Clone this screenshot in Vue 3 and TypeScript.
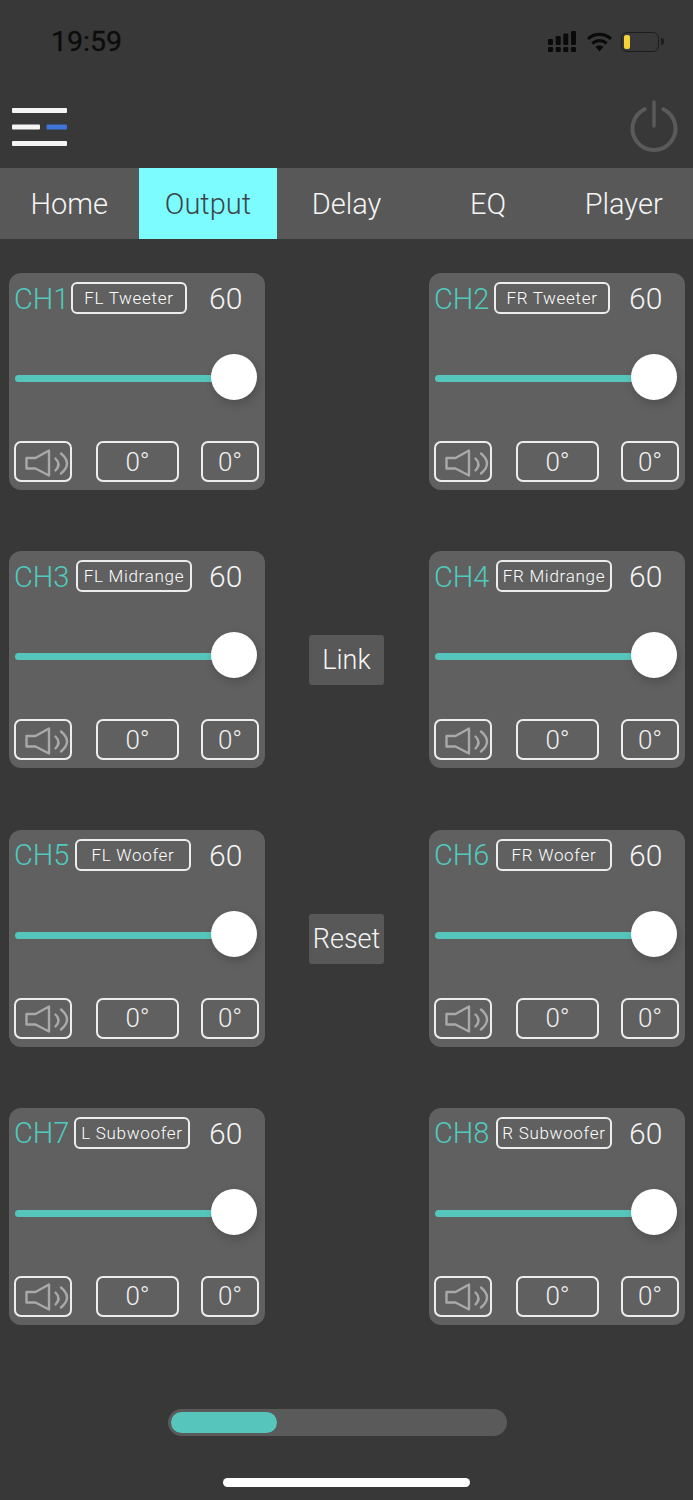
<template>
  <div class="screen">
    <div class="status-bar">
      <span class="clock">19:59</span>
      <div class="status-icons">
        <svg class="signal" width="28" height="21" viewBox="0 0 28 21">
          <g fill="#0a0a0a">
            <rect x="0" y="8" width="5" height="6" rx="1.2" />
            <rect x="7.7" y="5" width="5" height="9" rx="1.2" />
            <rect x="15.3" y="2.5" width="5" height="11.5" rx="1.2" />
            <rect x="23" y="0" width="5" height="14" rx="1.2" />
            <rect x="0" y="16" width="5" height="5" rx="1.2" />
            <rect x="7.7" y="16" width="5" height="5" rx="1.2" />
            <rect x="15.3" y="16" width="5" height="5" rx="1.2" />
            <rect x="23" y="16" width="5" height="5" rx="1.2" />
          </g>
        </svg>
        <svg class="wifi" width="27" height="20" viewBox="0 0 27 21">
          <g fill="none" stroke="#0a0a0a" stroke-width="3.4">
            <path d="M1.5 7.2C8.4 .9 18.6 .9 25.5 7.2" />
            <path d="M6 12C10.4 8.2 16.6 8.2 21 12" />
          </g>
          <path d="M9.3 15.6C11.7 13.6 15.3 13.6 17.7 15.6L13.5 20.6Z" fill="#0a0a0a" />
        </svg>
        <div class="battery">
          <span class="battery-level"></span>
        </div>
        <span class="battery-cap"></span>
      </div>
    </div>

    <header class="top-bar">
      <svg class="menu-icon" width="55" height="38" viewBox="0 0 55 38">
        <rect x="0" y="0" width="55" height="5" rx="1" fill="#f4f4f4" />
        <rect x="0" y="16.5" width="28" height="5" rx="1" fill="#f4f4f4" />
        <rect x="34.5" y="16.5" width="20.5" height="5" rx="1" fill="#3f74d8" />
        <rect x="0" y="33" width="55" height="5" rx="1" fill="#f4f4f4" />
      </svg>
      <svg class="power-icon" width="48" height="54" viewBox="0 0 48 54">
        <path d="M14.5 9.2A21.5 21.5 0 1 0 33.5 9.2" fill="none" stroke="#5a5a5a" stroke-width="4" stroke-linecap="round" />
        <path d="M24 2V26" fill="none" stroke="#5a5a5a" stroke-width="3.4" stroke-linecap="round" />
      </svg>
    </header>

    <nav class="tabs">
      <div v-for="tab in tabs" :key="tab" class="tab" :class="{ active: tab === 'Output' }">{{ tab }}</div>
    </nav>

    <main class="channels">
      <template v-for="(row, index) in rows" :key="index">
        <section v-for="(ch, side) in row.channels" :key="ch.id" class="card" :class="side === 0 ? 'left' : 'right'">
          <div class="card-head">
            <span class="ch-name" :style="{ width: ch.nameWidth + 'px' }">{{ ch.id }}</span>
            <span class="ch-label">{{ ch.label }}</span>
            <span class="ch-value">60</span>
          </div>
          <div class="slider">
            <div class="slider-track"></div>
            <div class="slider-thumb"></div>
          </div>
          <div class="card-foot">
            <button class="outline-btn mute">
              <svg width="44" height="32" viewBox="0 0 44 32">
                <g fill="none" stroke="#a9a9a9" stroke-width="2.4" stroke-linejoin="round" stroke-linecap="round">
                  <path d="M1.5 12H10.5L24 4.5V29.5L10.5 22.5H1.5Z" />
                  <path d="M30.5 12.5Q36.5 18.5 30.5 24.5" />
                  <path d="M36 7.5Q48 17.5 36 27.5" />
                </g>
              </svg>
            </button>
            <button class="outline-btn wide">0°</button>
            <button class="outline-btn narrow">0°</button>
          </div>
        </section>
        <div class="middle" :style="{ gridRow: index + 1 }">
          <button v-if="row.action" class="action-btn">{{ row.action }}</button>
        </div>
      </template>
    </main>

    <div class="pager">
      <div class="pager-thumb"></div>
    </div>
    <div class="home-indicator"></div>
  </div>
</template>

<script setup lang="ts">
interface Channel {
  id: string
  label: string
  nameWidth: number
}

interface Row {
  channels: Channel[]
  action?: string
}

const tabs = ['Home', 'Output', 'Delay', 'EQ', 'Player']

const rows: Row[] = [
  {
    channels: [
      { id: 'CH1', label: 'FL Tweeter', nameWidth: 57 },
      { id: 'CH2', label: 'FR Tweeter', nameWidth: 60 },
    ],
  },
  {
    channels: [
      { id: 'CH3', label: 'FL Midrange', nameWidth: 62 },
      { id: 'CH4', label: 'FR Midrange', nameWidth: 62 },
    ],
    action: 'Link',
  },
  {
    channels: [
      { id: 'CH5', label: 'FL Woofer', nameWidth: 61 },
      { id: 'CH6', label: 'FR Woofer', nameWidth: 62 },
    ],
    action: 'Reset',
  },
  {
    channels: [
      { id: 'CH7', label: 'L Subwoofer', nameWidth: 60 },
      { id: 'CH8', label: 'R Subwoofer', nameWidth: 62 },
    ],
  },
]
</script>

<style>
html,
body {
  margin: 0;
  background: #383838;
}
</style>

<style scoped>
.screen {
  width: 693px;
  height: 1500px;
  overflow: hidden;
  background: #383838;
  font-family: Roboto, "Liberation Sans", sans-serif;
  color: #f5f5f5;
}

.status-bar {
  height: 82px;
  padding: 1px 29px 0 51px;
  box-sizing: border-box;
  display: flex;
  align-items: center;
  justify-content: space-between;
}

.clock {
  font-size: 28.5px;
  font-weight: 400;
  -webkit-text-stroke: 0.3px #0c0c0c;
  color: #0c0c0c;
}

.status-icons {
  display: flex;
  align-items: center;
}

.wifi {
  margin-left: 10px;
}

.battery {
  margin-left: 8px;
  width: 38px;
  height: 20px;
  box-sizing: border-box;
  padding: 2px;
  border: 1.5px solid #1d1d1d;
  border-radius: 6px;
  display: flex;
}

.battery-level {
  width: 6px;
  background: #f5d13c;
  border-radius: 2px;
}

.battery-cap {
  width: 3px;
  height: 7px;
  margin-left: 2px;
  background: #1d1d1d;
  border-radius: 0 3px 3px 0;
}

.top-bar {
  height: 86px;
  padding: 18px 15px 0 12px;
  box-sizing: border-box;
  display: flex;
  align-items: flex-start;
  justify-content: space-between;
}

.menu-icon {
  margin-top: 7.5px;
}

.tabs {
  height: 71px;
  display: flex;
  background: #585858;
}

.tab {
  flex: none;
  width: 20%;
  box-sizing: border-box;
  display: flex;
  align-items: center;
  justify-content: center;
  padding-top: 1px;
  font-size: 29px;
  font-weight: 300;
}

.tab:nth-child(4) {
  padding-left: 6px;
}

.tab.active {
  background: #7dfcff;
  color: #3d4448;
}

.channels {
  display: grid;
  grid-template-columns: 256px 1fr 256px;
  grid-auto-rows: 217px;
  row-gap: 61.33px;
  padding: 34px 8px 0 9px;
}

.card {
  background: #606060;
  border-radius: 12px;
  padding: 9px 5px 8px;
  box-sizing: border-box;
  display: flex;
  flex-direction: column;
  justify-content: space-between;
}

.card.left {
  grid-column: 1;
}

.card.right {
  grid-column: 3;
}

.card-head {
  display: flex;
  align-items: center;
  height: 32px;
}

.ch-name {
  flex-shrink: 0;
  padding-top: 1px;
  font-size: 29px;
  font-weight: 300;
  white-space: nowrap;
  color: #4fcabd;
}

.ch-label {
  flex-shrink: 0;
  width: 116px;
  height: 32px;
  box-sizing: border-box;
  border: 2px solid #ededed;
  border-radius: 6px;
  display: flex;
  align-items: center;
  justify-content: center;
  font-size: 17px;
  font-weight: 300;
  letter-spacing: 0.7px;
  color: #fff;
}

.ch-value {
  margin-left: auto;
  width: 51px;
  padding-top: 1px;
  font-size: 30px;
  font-weight: 300;
}

.slider {
  position: relative;
  height: 46px;
  margin-top: 1px;
}

.slider-track {
  position: absolute;
  left: 1px;
  top: 20px;
  width: 215px;
  height: 7px;
  border-radius: 4px;
  background: #56c6bc;
}

.slider-thumb {
  position: absolute;
  left: 197px;
  top: -1px;
  width: 46px;
  height: 46px;
  border-radius: 50%;
  background: #fff;
  box-shadow: 2px 4px 10px rgba(0, 0, 0, 0.18);
}

.card-foot {
  display: flex;
  padding-right: 1px;
}

.outline-btn {
  height: 41px;
  box-sizing: border-box;
  padding: 0;
  border: 2px solid #ededed;
  border-radius: 7px;
  background: transparent;
  color: #f0f0f0;
  font-family: inherit;
  font-size: 26px;
  font-weight: 300;
  display: flex;
  align-items: center;
  justify-content: center;
}

.mute {
  width: 58px;
  padding-left: 8.5px;
  justify-content: flex-start;
}

.wide {
  width: 83px;
  margin-left: 24px;
}

.narrow {
  width: 58px;
  margin-left: 22px;
}

.middle {
  grid-column: 2;
  display: flex;
  justify-content: center;
  padding: 84px 1px 0 0;
}

.action-btn {
  width: 75px;
  height: 50px;
  padding: 0;
  border: none;
  border-radius: 3px;
  background: #585858;
  color: #f5f5f5;
  font-family: inherit;
  font-size: 27px;
  font-weight: 300;
}

.pager {
  width: 339px;
  height: 27px;
  margin: 84px 0 0 168px;
  padding: 3px;
  box-sizing: border-box;
  border-radius: 14px;
  background: #5a5a5a;
}

.pager-thumb {
  width: 106px;
  height: 21px;
  border-radius: 11px;
  background: #56c6bc;
}

.home-indicator {
  width: 247px;
  height: 9px;
  margin: 42px 0 0 223px;
  border-radius: 5px;
  background: #fff;
}
</style>
